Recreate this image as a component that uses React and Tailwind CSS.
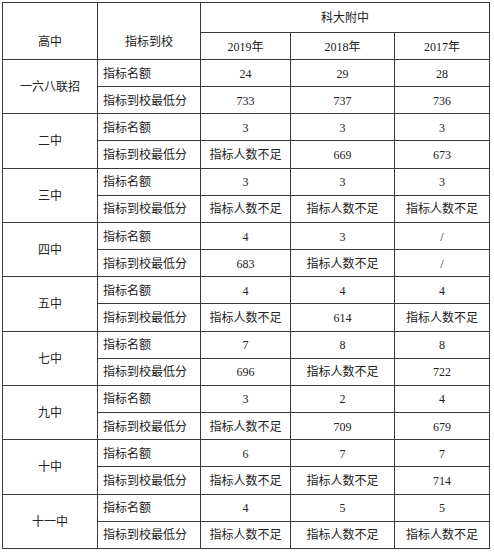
const NA = "指标人数不足";

const schools = [
  { name: "一六八联招", quota: ["24", "29", "28"], score: ["733", "737", "736"] },
  { name: "二中", quota: ["3", "3", "3"], score: [NA, "669", "673"] },
  { name: "三中", quota: ["3", "3", "3"], score: [NA, NA, NA] },
  { name: "四中", quota: ["4", "3", "/"], score: ["683", NA, "/"] },
  { name: "五中", quota: ["4", "4", "4"], score: [NA, "614", NA] },
  { name: "七中", quota: ["7", "8", "8"], score: ["696", NA, "722"] },
  { name: "九中", quota: ["3", "2", "4"], score: [NA, "709", "679"] },
  { name: "十中", quota: ["6", "7", "7"], score: [NA, NA, "714"] },
  { name: "十一中", quota: ["4", "5", "5"], score: [NA, NA, NA] },
];

const cell = "flex items-center justify-center bg-white pt-px";

export default function App() {
  return (
    <div className="min-h-screen bg-white pl-[2px] pt-[2px]">
      <div
        className="grid w-[488px] grid-cols-[94px_102px_89px_103px_94px] grid-rows-[29px_26px] auto-rows-[26.17px] gap-px bg-[#3a3a3a] p-px text-[12px] leading-none text-[#222]"
        style={{ fontFamily: '"Liberation Serif", "Noto Sans CJK SC", serif' }}
      >
        {/* header: the two left labels sit low in their span */}
        <div className="row-span-2 flex items-center justify-center bg-white pt-[22px]">高中</div>
        <div className="row-span-2 flex items-center justify-center bg-white pt-[22px]">指标到校</div>
        <div className={`${cell} col-span-3`}>科大附中</div>
        <div className={cell}>2019年</div>
        <div className={cell}>2018年</div>
        <div className={cell}>2017年</div>

        {schools.map((s) => (
          <SchoolRows key={s.name} school={s} />
        ))}
      </div>
    </div>
  );
}

function SchoolRows({ school }) {
  return (
    <>
      <div className={`${cell} row-span-2`}>{school.name}</div>
      <div className="flex items-center bg-white pl-[5px] pt-px">指标名额</div>
      {school.quota.map((v, i) => (
        <div key={"q" + i} className={cell}>
          {v}
        </div>
      ))}
      <div className="flex items-center bg-white pl-[5px] pt-px">指标到校最低分</div>
      {school.score.map((v, i) => (
        <div key={"s" + i} className={cell}>
          {v}
        </div>
      ))}
    </>
  );
}
